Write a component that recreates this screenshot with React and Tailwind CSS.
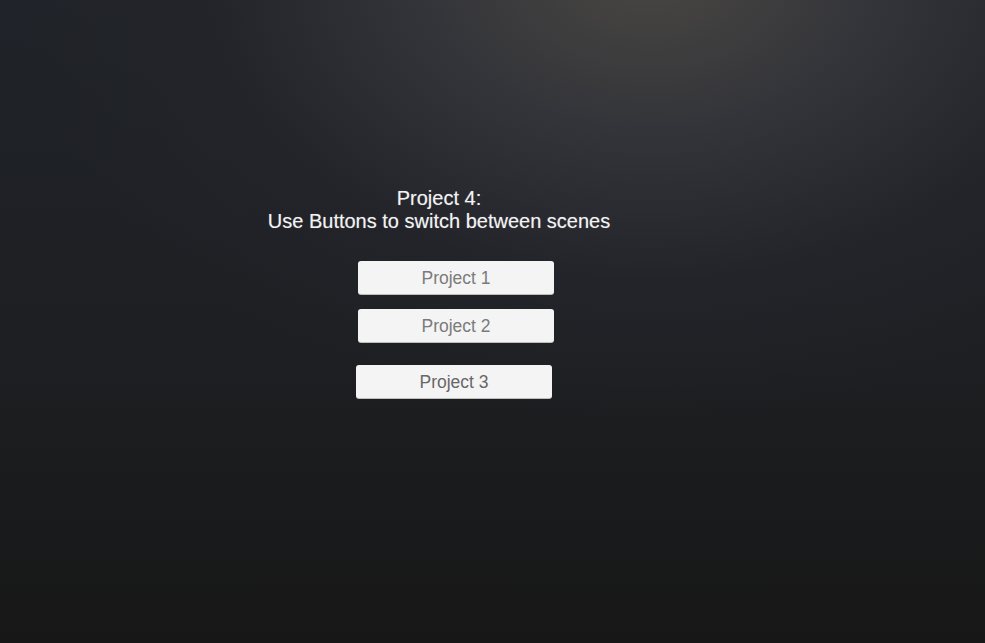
import React from 'react';

const buttons = [
    { label: 'Project 1', cls: 'ml-[358px] mt-[28px] text-[#7b7b7b]' },
    { label: 'Project 2', cls: 'ml-[358px] mt-[15px] text-[#7b7b7b]' },
    { label: 'Project 3', cls: 'ml-[356px] mt-[23px] text-[#676767]' },
];

export default function App() {
    return (
        <div className="h-screen w-full overflow-hidden bg-[#1a1b1d] bg-[radial-gradient(ellipse_65%_70%_at_66%_-5%,#4a4743_0%,#34353a_35%,#222429_70%,rgba(23,23,23,0)_100%),linear-gradient(to_bottom,#202329_0%,#1d1f22_55%,#171717_100%)] font-['Liberation_Sans',Arial,sans-serif]">
            <div className="flex flex-col items-start pt-[187px]">
                <div className="ml-[239px] w-[400px] text-center text-[20px] leading-[23px] text-[#f2f2f2] [text-shadow:0_0_1px_rgba(255,255,255,0.4)]">
                    <p>Project 4:</p>
                    <p>Use Buttons to switch between scenes</p>
                </div>

                {buttons.map(b => (
                    <button
                        key={b.label}
                        className={`${b.cls} h-[33px] w-[196px] rounded-[3px] bg-[#f4f4f4] pt-[2px] text-[17.5px] shadow-[0_1px_0_#bdbdbd] flex items-center justify-center`}
                    >
                        {b.label}
                    </button>
                ))}
            </div>
        </div>
    );
}
